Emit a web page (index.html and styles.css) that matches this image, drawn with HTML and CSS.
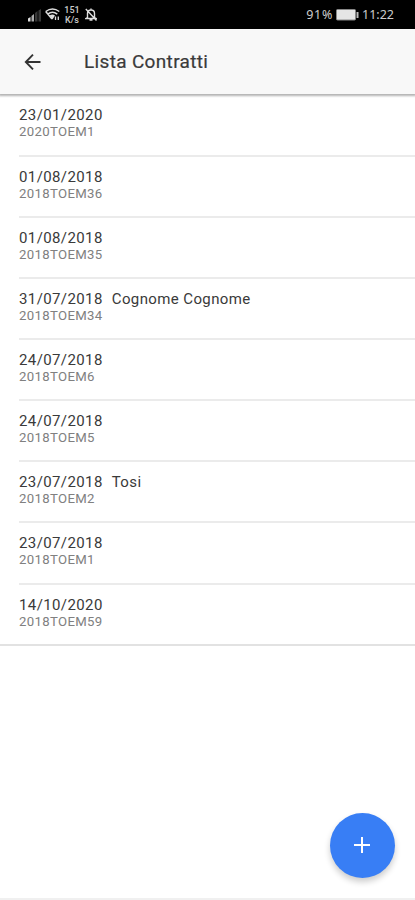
FILE: index.html
```
<!DOCTYPE html>
<html lang="it">
<head>
    <meta charset="UTF-8">
    <meta name="viewport" content="width=device-width, initial-scale=1.0">
    <title>Lista Contratti</title>
    <link rel="stylesheet" href="styles.css">
</head>
<body>
    <div class="status-bar">
        <div class="status-left">
            <svg class="signal" width="14" height="13" viewBox="0 0 14 13">
                <path d="M0 12.500V9.500L2.500 8V12.500Z" fill="#ddd"/>
                <path d="M3.500 12.500V7L6 5V12.500Z" fill="#aaa"/>
                <path d="M7 12.500V4L9.500 2V12.500ZM10.500 12.500V1.500L13 0V12.500Z" fill="#383838"/>
            </svg>
            <svg class="wifi" width="15" height="13" viewBox="0 0 15 13" fill="none" stroke="#ddd" stroke-width="1.500">
                <path d="M.7 3.500Q7.500-1.500 14.300 3.500M2.700 6.200Q7.500 2.500 12.300 6.200M.7 3.500L7 11"/>
                <path d="M4.500 7.500Q7.500 5.500 10 7.500L7.500 11.500Z" fill="#ddd" stroke="none"/>
                <path d="M10.500 8.500v3.500M13.300 8.500v3.500" stroke-width="1.300"/>
            </svg>
            <div class="speed"><span>151</span><span>K/s</span></div>
            <svg class="bell" width="12" height="13" viewBox="0 0 12 13" fill="none" stroke="#ddd" stroke-width="1.400">
                <path d="M2.500 9.500V5.500Q2.500 2 6 2T9.500 5.500V9.500L11 10.500H1ZM6 .5V2M4.500 12H7.500M.8 1L11.500 12.500"/>
            </svg>
        </div>
        <div class="status-right">
            <span class="percent">91%</span>
            <svg width="23" height="12" viewBox="0 0 23 12">
                <rect x=".5" y=".5" width="19" height="10.500" rx="1" fill="#e5e5e5" stroke="#888"/>
                <path d="M20.500 3H22.500V9H20.500Z" fill="#bbb"/>
            </svg>
            <span class="clock">11:22</span>
        </div>
    </div>

    <header class="toolbar">
        <svg class="back" width="18" height="18" viewBox="0 0 18 18" fill="none" stroke="#333" stroke-width="1.900">
            <path d="M16.500 9H2M9 1.700L1.800 9L9 16.300"/>
        </svg>
        <h1>Lista Contratti</h1>
    </header>

    <main class="list">
        <div class="item"><div class="date">23/01/2020</div><div class="code">2020TOEM1</div></div>
        <div class="item"><div class="date">01/08/2018</div><div class="code">2018TOEM36</div></div>
        <div class="item"><div class="date">01/08/2018</div><div class="code">2018TOEM35</div></div>
        <div class="item"><div class="date">31/07/2018<span class="name">Cognome Cognome</span></div><div class="code">2018TOEM34</div></div>
        <div class="item"><div class="date">24/07/2018</div><div class="code">2018TOEM6</div></div>
        <div class="item"><div class="date">24/07/2018</div><div class="code">2018TOEM5</div></div>
        <div class="item"><div class="date">23/07/2018<span class="name">Tosi</span></div><div class="code">2018TOEM2</div></div>
        <div class="item"><div class="date">23/07/2018</div><div class="code">2018TOEM1</div></div>
        <div class="item last"><div class="date">14/10/2020</div><div class="code">2018TOEM59</div></div>
    </main>

    <button class="fab" type="button" aria-label="Aggiungi">
        <svg width="16" height="16" viewBox="0 0 16 16" stroke="#fff" stroke-width="2">
            <path d="M8 0V16M0 8H16"/>
        </svg>
    </button>
</body>
</html>
```
FILE: styles.css
```
* {
    box-sizing: border-box;
}
body {
    margin: 0;
    height: 900px;
    overflow: hidden;
    position: relative;
    background: #fff;
    border-bottom: 2px solid #f0f0f0;
    font-family: Roboto, sans-serif;
    color: #3a3a3a;
}
.status-bar {
    height: 29px;
    padding: 0 21px 0 28px;
    background: #000;
    color: #ccc;
    display: flex;
    justify-content: space-between;
    align-items: center;
}
.status-left, .status-right {
    display: flex;
    align-items: center;
}
.signal {
    margin-top: 1px;
    margin-right: 3px;
}
.speed {
    display: flex;
    flex-direction: column;
    width: 16px;
    margin-left: 4px;
    margin-right: 5px;
    font-size: 9px;
    line-height: 10px;
    font-weight: 500;
    text-align: center;
}
.status-right {
    font-family: "Noto Sans", sans-serif;
    font-size: 12.5px;
    gap: 3px;
}
.percent {
    letter-spacing: 0.7px;
}
.toolbar {
    height: 65px;
    padding-left: 24px;
    background: #f8f8f8;
    box-shadow: 0 1px 2px 1px rgba(0, 0, 0, 0.3);
    display: flex;
    align-items: center;
}
.toolbar h1 {
    margin: 0 0 0 42px;
    font-size: 19px;
    font-weight: 400;
    line-height: 24px;
    letter-spacing: 0.33px;
    -webkit-text-stroke: 0.2px #3a3a3a;
}
.list {
    padding-top: 1.4px;
}
.item {
    height: 61.15px;
    margin-left: 19px;
    padding-top: 11px;
    border-bottom: 2px solid #ebebeb;
}
.item.last {
    margin-left: 0;
    padding-left: 19px;
    border-bottom-color: #e2e2e2;
}
.date {
    font-size: 15px;
    line-height: 18px;
    letter-spacing: 0.39px;
    white-space: nowrap;
}
.name {
    margin-left: 9px;
}
.code {
    font-size: 13.2px;
    line-height: 16px;
    letter-spacing: 0.33px;
    color: #808080;
}
.fab {
    position: absolute;
    left: 330px;
    top: 813px;
    width: 65px;
    height: 65px;
    padding: 0;
    border: none;
    border-radius: 50%;
    background: #387ef5;
    box-shadow: 0 4px 6px rgba(0, 0, 0, 0.2);
    display: flex;
    align-items: center;
    justify-content: center;
}
.fab svg {
    margin: 0 1px 1px 0;
}
```
